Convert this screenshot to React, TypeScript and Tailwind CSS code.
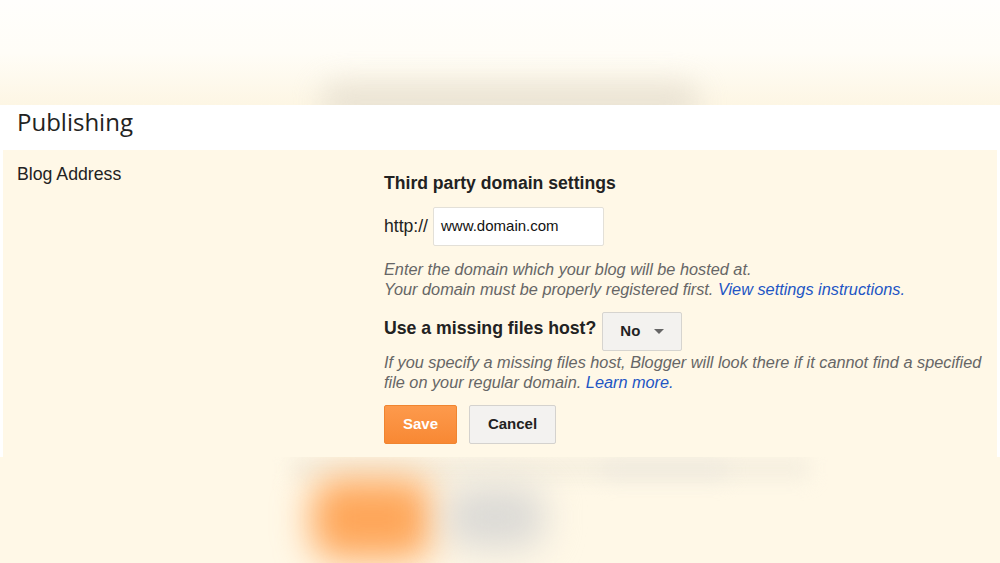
import React from "react";

export default function App() {
  return (
    <div className="w-[1000px] h-[563px] overflow-hidden bg-[#fff8e7] font-['Liberation_Sans',Arial,sans-serif] text-[#222]">
      {/* top blurred area */}
      <div className="relative h-[105px] overflow-hidden bg-gradient-to-b from-[#fffefc] via-[#fffdf7] via-50% to-[#fdf6e4]">
        <div className="absolute left-[320px] top-[82px] w-[380px] h-[40px] rounded-full bg-[#e6dfd0] blur-[14px] opacity-80"></div>
      </div>
      {/* title band */}
      <div className="h-[45px] bg-white pl-[17px]">
        <h1 className="font-['Open_Sans',sans-serif] text-[24px] leading-[34px] text-[#222]">Publishing</h1>
      </div>
      {/* panel */}
      <div className="bg-white pl-[3px] pr-[3px]">
        <div className="h-[307px] bg-[#fff8e7] flex">
          <div className="w-[381px] pl-[14px] pt-[14px] text-[17.7px] leading-[20px]">Blog Address</div>
          <div className="flex-1 pt-[23px]">
            <div className="font-bold text-[17.6px] leading-[20px] text-[#222]">Third party domain settings</div>
            <div className="flex items-center gap-[5px] mt-[14px]">
              <span className="text-[17.6px]">http://</span>
              <div className="w-[171px] h-[39px] bg-white border border-[#e3e0d8] rounded-[2px] flex items-center pl-[7px] text-[15px] text-[#111]">www.domain.com</div>
            </div>
            <div className="mt-[13px] italic text-[16.3px] leading-[20px] text-[#666]">
              <div>Enter the domain which your blog will be hosted at.</div>
              <div>Your domain must be properly registered first. <span className="text-[#2255c4]">View settings instructions.</span></div>
            </div>
            <div className="flex items-center gap-[6px] mt-[13px]">
              <span className="font-bold text-[17.7px] leading-[20px] -mt-[8px]">Use a missing files host?</span>
              <div className="w-[80px] h-[39px] bg-[#f3f2ef] border border-[#d6d4cf] rounded-[2px] flex items-center pl-[17px] gap-[14px]">
                <span className="font-bold text-[15px] text-[#222]">No</span>
                <svg width="10" height="6" viewBox="0 0 10 6"><path d="M0 0 L10 0 L5 5 Z" fill="#666" /></svg>
              </div>
            </div>
            <div className="mt-[1px] italic text-[16.3px] leading-[20px] text-[#666]">
              <div>If you specify a missing files host, Blogger will look there if it cannot find a specified</div>
              <div>file on your regular domain. <span className="text-[#2255c4]">Learn more.</span></div>
            </div>
            <div className="flex gap-[12px] mt-[13px]">
              <button className="w-[73px] h-[39px] rounded-[2px] bg-gradient-to-b from-[#fd9a4c] to-[#f88833] border border-[#f08530] text-white font-bold text-[15px]">Save</button>
              <button className="w-[87px] h-[39px] rounded-[2px] bg-[#f3f2f0] border border-[#d4d2ce] text-[#222] font-bold text-[15px]">Cancel</button>
            </div>
          </div>
        </div>
      </div>
      {/* bottom blurred area */}
      <div className="relative h-[106px] overflow-hidden bg-[#fff8e7]">
        <div className="absolute left-[290px] top-[0px] w-[520px] h-[22px] bg-[#eee8da] blur-[10px] opacity-60"></div>
        <div className="absolute left-[312px] top-[22px] w-[120px] h-[80px] rounded-[24px] bg-[#fea659] blur-[18px]"></div>
        <div className="absolute left-[445px] top-[28px] w-[100px] h-[64px] rounded-[24px] bg-[#dcdad6] blur-[18px]"></div>
        <div className="absolute left-[600px] top-[4px] w-[130px] h-[18px] rounded-full bg-[#e8e4dc] blur-[10px] opacity-50"></div>
      </div>
    </div>
  );
}
